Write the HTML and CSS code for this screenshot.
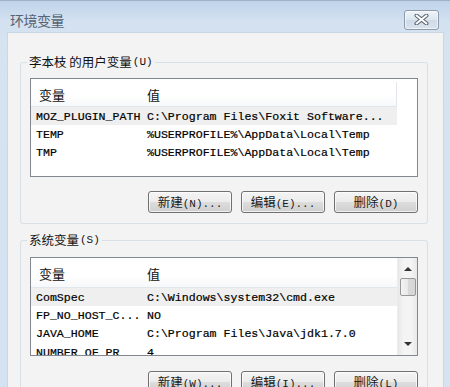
FILE: index.html
```html
<!DOCTYPE html>
<html lang="zh-CN">
<head>
<meta charset="utf-8">
<title>环境变量</title>
<link rel="stylesheet" href="styles.css">
</head>
<body>
<div class="window">
  <div class="titlebar">
    <span class="title">环境变量</span>
    <button class="close" aria-label="关闭">
      <svg width="15" height="11" viewBox="0 0 15 11">
        <path d="M2.5 1.5 L12.5 9.5 M12.5 1.5 L2.5 9.5" stroke="#5b6470" stroke-width="4" stroke-linecap="round" fill="none"/>
        <path d="M2.5 1.5 L12.5 9.5 M12.5 1.5 L2.5 9.5" stroke="#ffffff" stroke-width="2" stroke-linecap="round" fill="none"/>
      </svg>
    </button>
  </div>
  <div class="client">
    <fieldset class="group">
      <legend>李本枝 的用户变量<span class="mn">(U)</span></legend>
      <div class="list">
        <div class="list-main">
          <div class="list-head">
            <span class="c1">变量</span><span class="c2 divided">值</span>
          </div>
          <div class="row sel"><span class="c1">MOZ_PLUGIN_PATH</span><span class="c2">C:\Program Files\Foxit Software...</span></div>
          <div class="row"><span class="c1">TEMP</span><span class="c2">%USERPROFILE%\AppData\Local\Temp</span></div>
          <div class="row"><span class="c1">TMP</span><span class="c2">%USERPROFILE%\AppData\Local\Temp</span></div>
        </div>
      </div>
      <div class="buttons">
        <button class="btn">新建<span class="mn">(N)...</span></button>
        <button class="btn">编辑<span class="mn">(E)...</span></button>
        <button class="btn">删除<span class="mn">(D)</span></button>
      </div>
    </fieldset>

    <fieldset class="group group2">
      <legend>系统变量<span class="mn">(S)</span></legend>
      <div class="list list2">
        <div class="list-main">
          <div class="list-head">
            <span class="c1">变量</span><span class="c2">值</span>
          </div>
          <div class="row sel"><span class="c1">ComSpec</span><span class="c2">C:\Windows\system32\cmd.exe</span></div>
          <div class="row"><span class="c1">FP_NO_HOST_C...</span><span class="c2">NO</span></div>
          <div class="row"><span class="c1">JAVA_HOME</span><span class="c2">C:\Program Files\Java\jdk1.7.0</span></div>
          <div class="row"><span class="c1">NUMBER_OF_PR</span><span class="c2">4</span></div>
        </div>
        <div class="scrollbar">
          <span class="arrow up"></span>
          <span class="thumb"></span>
          <span class="track"></span>
          <span class="arrow down"></span>
        </div>
      </div>
      <div class="buttons">
        <button class="btn">新建<span class="mn">(W)...</span></button>
        <button class="btn">编辑<span class="mn">(I)...</span></button>
        <button class="btn">删除<span class="mn">(L)</span></button>
      </div>
    </fieldset>
  </div>
</div>
</body>
</html>
```

FILE: styles.css
```css
html, body {
  margin: 0;
  padding: 0;
  height: 100%;
  overflow: hidden;
}

body {
  background: #d4e2f1;
  font-family: "Liberation Mono", "Noto Sans CJK SC", monospace;
  color: #111;
}

.window {
  height: 100%;
  background: linear-gradient(to bottom, #bfd3ea 0px, #d3e1f0 20px, #d6e3f1 40px, #d4e2f1 100%);
  border-top: 1px solid #9fb1c6;
  box-sizing: border-box;
  display: flex;
  flex-direction: column;
}

.titlebar {
  height: 32px;
  padding: 5px 11px 0 10px;
  box-sizing: border-box;
  display: flex;
  align-items: center;
  justify-content: space-between;
  flex: none;
}

.title {
  font-family: "Noto Sans CJK SC", sans-serif;
  font-size: 14px;
  color: #566474;
  letter-spacing: -0.5px;
}

.close {
  width: 35px;
  height: 20px;
  padding: 0;
  border: 1px solid #8c9aab;
  border-radius: 3px;
  background: linear-gradient(to bottom, #eef3f8 0%, #dde6f0 50%, #cfdae7 51%, #d9e3ee 100%);
  display: flex;
  align-items: center;
  justify-content: center;
  box-shadow: inset 0 0 0 1px rgba(255,255,255,0.6);
}

.client {
  flex: 1;
  margin: 0 7px 0 8px;
  padding: 21px 15px 0 12px;
  background: #f3f3f3;
  box-shadow: 0 0 0 1px #c9d6e3;
}

.group {
  margin: 0;
  padding: 8px 9px 10px 9px;
  border: 1px solid #d9e0e5;
  border-radius: 3px;
  width: 408px;
  box-sizing: border-box;
}

.group2 {
  margin-top: 8px;
  padding-top: 9px;
}

legend {
  margin-left: -3px;
  padding: 0 2px;
  height: 16px;
  display: flex;
  align-items: center;
  font-family: "Noto Sans CJK SC", sans-serif;
  font-size: 12.5px;
  line-height: 16px;
  color: #111;
}

.mn {
  font-family: "Liberation Mono", monospace;
  font-size: 11px;
  line-height: 1;
}

legend .mn {
  margin-left: 1px;
}

.list {
  height: 99px;
  border: 1px solid #828790;
  background: #fff;
  box-sizing: border-box;
  display: flex;
  overflow: hidden;
}

.list-main {
  width: 366px;
  flex: none;
}

.list-head {
  height: 28px;
  box-sizing: border-box;
  border-bottom: 1px solid #e3e6ea;
  display: flex;
  align-items: center;
  padding-top: 3px;
  background: linear-gradient(to bottom, #ffffff 0%, #ffffff 60%, #f7f8fa 100%);
  font-family: "Noto Sans CJK SC", sans-serif;
  font-size: 13px;
}

.list2 .list-head {
  height: 30px;
  padding-top: 2px;
}

.list-head .c1 {
  width: 110px;
  padding-left: 8px;
  box-sizing: border-box;
}

.list-head .c2 {
  width: 256px;
  padding-left: 6px;
  box-sizing: border-box;
  align-self: stretch;
  display: flex;
  align-items: center;
}

.list-head .c2.divided {
  border-right: 1px solid #e3e6ea;
}

.row {
  height: 18px;
  display: flex;
  align-items: center;
  font-size: 11.6px;
  white-space: nowrap;
  color: #000;
  -webkit-text-stroke: 0.2px #000;
}

.list2 .row {
  height: 18.3px;
}

.row.sel {
  background: #efefef;
}

.row .c1 {
  width: 110px;
  padding-left: 5px;
  box-sizing: border-box;
  flex: none;
}

.row .c2 {
  padding-left: 6px;
}

.scrollbar {
  flex: 1;
  background: linear-gradient(to right, #e8e8e8 0%, #f4f4f4 30%, #f4f4f4 70%, #e8e8e8 100%);
  border-left: 1px solid #ececec;
  display: flex;
  flex-direction: column;
  align-items: center;
}

.arrow {
  width: 0;
  height: 0;
  border-left: 4px solid transparent;
  border-right: 4px solid transparent;
  flex: none;
}

.arrow.up {
  margin-top: 9px;
  border-bottom: 4px solid #333;
}

.arrow.down {
  margin-bottom: 9px;
  border-top: 4px solid #333;
}

.thumb {
  margin-top: 7px;
  width: 16px;
  height: 18px;
  box-sizing: border-box;
  border: 1px solid #979797;
  border-radius: 2px;
  background: linear-gradient(to right, #f3f3f3 0%, #e8e8e8 50%, #d9d9d9 51%, #d6d6d6 100%);
  flex: none;
}

.track {
  flex: 1;
}

.buttons {
  display: flex;
  justify-content: flex-end;
  gap: 9px;
  margin-top: 14px;
}

.group2 .buttons {
  margin-top: 15px;
}

.btn {
  width: 84px;
  height: 22px;
  padding: 0;
  border: 1px solid #707070;
  border-radius: 3px;
  background: linear-gradient(to bottom, #f4f4f4 0%, #ececec 48%, #dddddd 52%, #cfcfcf 100%);
  box-shadow: inset 0 0 0 1px rgba(255,255,255,0.7);
  font-family: "Noto Sans CJK SC", sans-serif;
  font-size: 12.5px;
  color: #1a1a1a;
  line-height: 20px;
}
```
